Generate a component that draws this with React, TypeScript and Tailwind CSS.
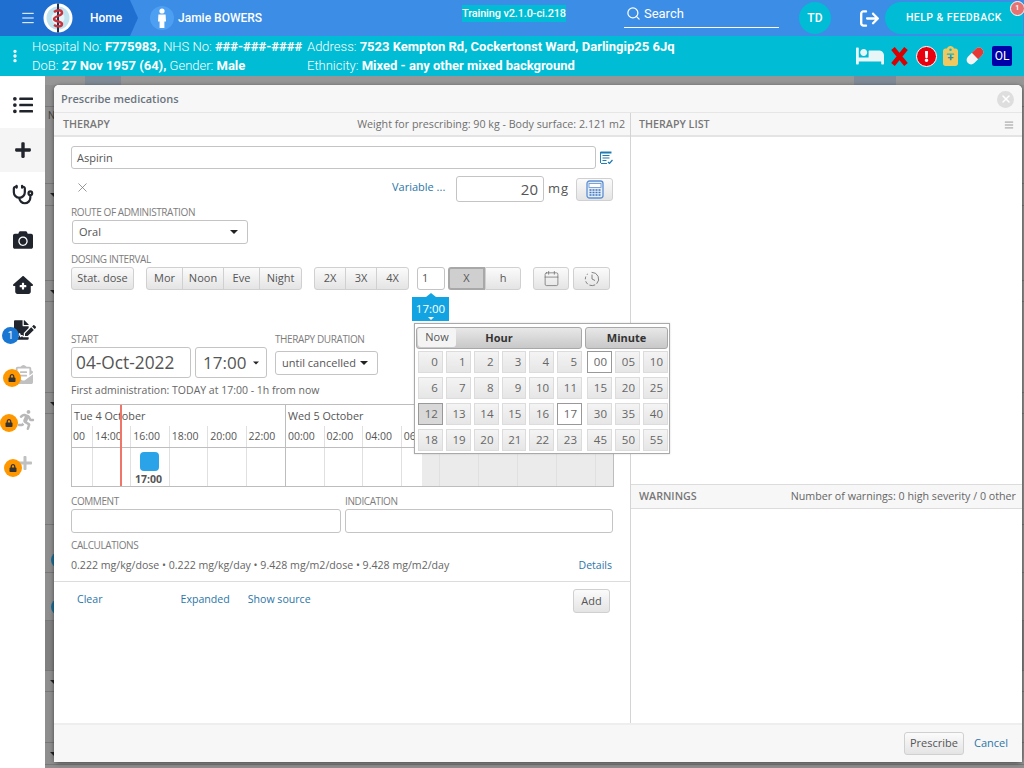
import React from "react";
import { FaBed, FaCamera, FaListUl, FaPlus, FaLock, FaExclamation, FaRunning, FaFileSignature, FaEnvelopeOpenText } from "react-icons/fa";
import { FaHouseMedical, FaArrowRightFromBracket, FaClipboard } from "react-icons/fa6";
import { Search, Stethoscope, X, Menu, EllipsisVertical, Calendar, ClockFading, AlignJustify } from "lucide-react";

const Label = ({ children, className = "" }: { children: React.ReactNode; className?: string }) => (
  <div className={`text-[10px] leading-[12px] tracking-[-0.4px] whitespace-nowrap text-[#7d7d7d] ${className}`}>{children}</div>
);

const Btn = ({ children, className = "" }: { children?: React.ReactNode; className?: string }) => (
  <div className={`flex h-[23px] items-center justify-center border border-[#d0d0d0] bg-gradient-to-b from-[#fbfbfb] to-[#e4e4e4] text-[11px] text-[#555] ${className}`}>
    {children}
  </div>
);

const Caret = ({ className = "" }: { className?: string }) => (
  <span className={`inline-block h-0 w-0 border-x-[4px] border-t-[4px] border-x-transparent border-t-[#222] ${className}`} />
);

const Cell = ({ v, kind }: { v: string; kind?: "sel" | "cur" }) => (
  <div
    className={`flex h-[22px] items-center justify-end pr-[4px] text-[11.5px] text-[#666] ${
      kind === "cur"
        ? "border border-[#999] bg-white"
        : kind === "sel"
          ? "border border-[#999] bg-[#d8d8d8]"
          : "border border-[#dcdcdc] bg-gradient-to-b from-[#f4f4f4] to-[#e6e6e6]"
    }`}
  >
    {v}
  </div>
);

const bgRows: { h: number; tri?: boolean; dot?: number; dark?: boolean; text?: boolean }[] = [
  { h: 22 }, { h: 77, text: true }, { h: 22, tri: true }, { h: 75 }, { h: 21, tri: true }, { h: 91 }, { h: 21, tri: true },
  { h: 111 }, { h: 48, dot: 27 }, { h: 48, dot: 26 }, { h: 50, dark: true }, { h: 21, tri: true }, { h: 51 }, { h: 22, tri: true },
];

const hoursA = ["14:00", "16:00", "18:00", "20:00", "22:00"];

const sideIcons = [
  { icon: <FaPlus size={18} />, cls: "h-[44px] text-[#20242c] bg-[#f5f5f5]" },
  { icon: <Stethoscope size={22} strokeWidth={2.4} />, cls: "h-[45px] text-[#20242c]" },
  { icon: <FaCamera size={20} />, cls: "h-[45px] text-[#20242c]" },
  { icon: <FaHouseMedical size={20} />, cls: "h-[45px] text-[#20242c]" },
];

const LockBadge = ({ className }: { className: string }) => (
  <span className={`absolute flex h-[18px] w-[18px] items-center justify-center rounded-full bg-[#ff9800] text-[#333] ${className}`}>
    <FaLock size={8} />
  </span>
);

export default function App() {
  return (
    <div className="relative flex h-[768px] w-[1024px] flex-col overflow-hidden bg-white font-['Roboto',sans-serif]">
      {/* top bar */}
      <header className="flex h-[36px] items-center bg-[#3b8de6] text-white">
        <div className="flex h-full w-[138px] items-center bg-[#1f6fd0] pl-[20px] [clip-path:polygon(0_0,130px_0,138px_50%,130px_100%,0_100%)]">
          <Menu size={16} strokeWidth={1.5} />
          <svg width="30" height="30" viewBox="0 0 30 30" className="ml-[7px]">
            <circle cx="15" cy="15" r="14.5" fill="#fff" />
            <circle cx="15" cy="15" r="11.5" fill="#bfe3ef" />
            <circle cx="15" cy="15" r="6.5" fill="#e6f4f8" />
            <rect x="14" y="0.5" width="2" height="29" fill="#22304f" />
            <path d="M11 9c4-3 8-2 8 1s-8 3-8 6 8 2 8 5-5 3-8 1" fill="none" stroke="#c8323c" strokeWidth="2.4" />
          </svg>
          <span className="ml-[17px] text-[12px] font-medium">Home</span>
        </div>
        <span className="ml-[12px] flex h-[24px] w-[24px] items-center justify-center rounded-full bg-[#4d9ff2]">
          <svg width="10" height="20" viewBox="0 0 10 20" fill="#fff">
            <circle cx="5" cy="3" r="2.6" />
            <path d="M1.4 6.5h7.2l.4 7H7.4V20H2.6v-6.5H1z" />
          </svg>
        </span>
        <span className="ml-[4px] w-[84px] text-[12px] font-medium whitespace-nowrap">Jamie BOWERS</span>
        <span className="mb-[9px] ml-[200px] bg-[#00bcd4] text-[10.9px] leading-[17px] font-medium tracking-[-0.1px] whitespace-nowrap">Training v2.1.0-ci.218</span>
        <div className="ml-[58px] flex h-[28px] w-[155px] items-center self-start border-b border-white pl-[2px]">
          <Search size={15} strokeWidth={2} />
          <span className="ml-[3px] text-[13px]">Search</span>
        </div>
        <span className="ml-[20px] flex h-[32px] w-[32px] items-center justify-center rounded-full bg-[#00bcd4] text-[12px] font-medium">TD</span>
        <FaArrowRightFromBracket size={19} className="ml-[29px]" />
        <div className="relative ml-[6px] flex h-[32px] w-[138px] shrink-0 items-center justify-center rounded-l-[16px] bg-[#00bcd4] text-[10.5px] font-medium tracking-[0.45px] whitespace-nowrap">
          HELP &amp; FEEDBACK
          <span className="absolute top-[-1px] right-[-2px] flex h-[15px] w-[15px] items-center justify-center rounded-full border border-white bg-[#e57373] text-[7px] font-bold">1</span>
        </div>
      </header>

      {/* patient bar */}
      <div className="flex h-[40px] items-center bg-[#00bcd4] text-[13px] leading-[19px] text-white">
        <EllipsisVertical size={16} strokeWidth={3} className="ml-[7px]" />
        <div className="ml-[9px] w-[275px] font-light">
          <div className="whitespace-nowrap">Hospital No: <b className="font-bold">F775983,</b> NHS No: <b className="font-bold">###-###-####</b></div>
          <div className="whitespace-nowrap">DoB: <b className="font-bold">27 Nov 1957 (64),</b> Gender: <b className="font-bold">Male</b></div>
        </div>
        <div className="font-light">
          <div className="whitespace-nowrap">Address: <b className="font-bold">7523 Kempton Rd, Cockertonst Ward, Darlingip25 6Jq</b></div>
          <div className="whitespace-nowrap">Ethnicity: <b className="font-bold">Mixed - any other mixed background</b></div>
        </div>
        <div className="ml-auto flex items-center pr-[12px]">
          <FaBed size={28} className="text-[#e8f6f8]" />
          <svg width="17" height="19" viewBox="0 0 17 19" className="ml-[7px]">
            <path d="M2 1.5 15 17.5M15 1.5 2 17.5" stroke="#d80000" strokeWidth="4.6" fill="none" />
          </svg>
          <span className="ml-[8px] flex h-[21px] w-[21px] items-center justify-center rounded-full border border-white bg-[#e8000f]">
            <FaExclamation size={11} />
          </span>
          <span className="relative ml-[6px] flex h-[21px] w-[15px] items-center justify-center">
            <FaClipboard size={20} className="text-[#f0c860]" />
            <span className="absolute top-[6px] text-[11px] leading-[11px] font-bold text-[#2c8fb0]">+</span>
          </span>
          <svg width="20" height="20" viewBox="0 0 20 20" className="ml-[7px]">
            <g transform="rotate(-45 10 10)">
              <rect x="0" y="5.5" width="20" height="9" rx="4.5" fill="#f4f4f4" />
              <path d="M10 5.5h5.5a4.5 4.5 0 0 1 0 9H10z" fill="#e53935" />
            </g>
          </svg>
          <span className="ml-[7px] flex h-[20px] w-[20px] items-center justify-center rounded-[2px] bg-[#0000a8] text-[12px]">OL</span>
        </div>
      </div>

      {/* body */}
      <div className="flex flex-1 overflow-hidden">
        <nav className="w-[45px] shrink-0 bg-white">
          <div className="flex h-[52px] items-center justify-center pt-[6px] text-[#20242c]">
            <FaListUl size={20} />
          </div>
          {sideIcons.map((s, i) => (
            <div key={i} className={`flex items-center justify-center ${s.cls}`}>
              {s.icon}
            </div>
          ))}
          <div className="relative flex h-[45px] items-center justify-center pl-[4px] text-[#20242c]">
            <FaFileSignature size={22} />
            <span className="absolute top-[20px] left-[2px] flex h-[17px] w-[17px] items-center justify-center rounded-full bg-[#1976d2] text-[10px] text-white">1</span>
          </div>
          <div className="relative flex h-[45px] items-center justify-center pl-[2px] text-[#c0c0c0]">
            <FaEnvelopeOpenText size={19} />
            <LockBadge className="top-[17px] left-[3px]" />
          </div>
          <div className="relative flex h-[45px] items-center justify-center pl-[6px] text-[#b8b8b8]">
            <FaRunning size={20} />
            <LockBadge className="top-[17px] left-0" />
          </div>
          <div className="relative flex h-[45px] items-center justify-center pb-[4px] pl-[4px] text-[#c0c0c0]">
            <FaPlus size={16} />
            <LockBadge className="top-[17px] left-[4px]" />
          </div>
        </nav>

        {/* dimmed page behind the dialog */}
        <main className="flex-1 bg-[#8e8e8e]">
          <div className="flex h-[9px] items-end bg-[#969696]">
            <span className="ml-[40px] h-[9px] w-[36px] bg-[#7f8a96]" />
            <span className="ml-[733px] h-[9px] w-[42px] bg-[#7f8a96]" />
          </div>
          {bgRows.map((r, i) => (
            <div key={i} className={`relative border-b border-[#777] ${r.dark ? "bg-[#808080]" : "bg-[#8e8e8e]"}`} style={{ height: r.h }}>
              {r.tri && <Caret className="absolute top-[9px] left-[5px]" />}
              {r.dot !== undefined && <span className="absolute left-[6px] h-[16px] w-[16px] rounded-full bg-[#1d6d97]" style={{ top: r.dot }} />}
              {r.text && <span className="absolute top-[2px] left-[3px] text-[10px] leading-[14px] text-[#444]">N</span>}
            </div>
          ))}
        </main>
      </div>

      {/* dialog */}
      <section className="absolute top-[85px] left-[54px] flex h-[677px] w-[968px] flex-col rounded-[5px] bg-white font-['Open_Sans',sans-serif] text-[#555] shadow-[0_1px_4px_rgba(0,0,0,0.5)]">
        <div className="flex h-[28px] items-center justify-between rounded-t-[5px] border-b border-[#e6e6e6] bg-[#f7f7f7] pt-[1px] pr-[8px] pl-[7px]">
          <span className="text-[11px] font-semibold text-[#6b7580]">Prescribe medications</span>
          <span className="flex h-[17px] w-[17px] items-center justify-center rounded-full bg-[#dedede] text-white">
            <X size={12} strokeWidth={3} />
          </span>
        </div>

        <div className="flex min-h-0 flex-1">
          {/* left pane */}
          <div className="flex w-[577px] shrink-0 flex-col border-r border-[#d4d4d4]">
            <div className="flex h-[24px] shrink-0 items-center justify-between border-b-2 border-[#e4e4e4] bg-[#f7f7f7] pt-[1px] pr-[5px] pl-[9px] text-[10.7px]">
              <span className="font-semibold text-[#777]">THERAPY</span>
              <span className="text-[#6f6f6f]">Weight for prescribing: 90 kg - Body surface: 2.121 m2</span>
            </div>

            <div className="px-[17px]">
              <div className="mt-[9px] flex items-center">
                <div className="flex h-[23px] w-[526px] items-center rounded-[3px] border border-[#c4c4c4] px-[5px] pt-[1px] text-[11px]">Aspirin</div>
                <svg width="13" height="13" viewBox="0 0 13 13" className="ml-[4px] text-[#1f7ab0]" fill="none" stroke="currentColor">
                  <path d="M.5 1.5h11" strokeWidth="2" />
                  <path d="M.5 1v11M1 12.5h6M2.5 4.5h7M2.5 7h7M2.5 9.5h4" strokeWidth="1" />
                  <path d="M8 11l1.5 1.5L12.5 9" strokeWidth="1.2" />
                </svg>
              </div>
              <div className="mt-[7px] flex h-[26px] items-center">
                <X size={15} strokeWidth={1.2} className="mb-[4px] ml-[4px] text-[#777]" />
                <span className="mb-[4px] ml-[302px] w-[51px] text-[11px] whitespace-nowrap text-[#2b76a8]">Variable ...</span>
                <div className="ml-[13px] flex h-[26px] w-[88px] items-center justify-end rounded-[3px] border border-[#c4c4c4] pr-[5px] text-[15px] text-[#555]">20</div>
                <span className="ml-[4px] w-[22px] text-[13px] tracking-[1px]">mg</span>
                <Btn className="ml-[6px] w-[37px] rounded-[3px]">
                  <svg width="18" height="19" viewBox="0 0 18 19">
                    <rect x="1" y="1" width="16" height="17" rx="2.5" fill="#e4eefa" stroke="#5f90d2" strokeWidth="1.3" />
                    <rect x="3" y="3.5" width="12" height="4" fill="#fff" stroke="#5f90d2" strokeWidth=".8" />
                    <path d="M3.5 10h11M3.5 12.5h11M3.5 15h11" stroke="#3f74bd" strokeWidth="1.4" strokeDasharray="2 1" />
                  </svg>
                </Btn>
              </div>
              <Label className="mt-[4px]">ROUTE OF ADMINISTRATION</Label>
              <div className="mt-[2px] ml-px flex h-[24px] w-[176px] items-center justify-between rounded-[3px] border border-[#c4c4c4] pr-[9px] pl-[6px] text-[11px]">
                Oral <Caret />
              </div>
              <Label className="mt-[9px]">DOSING INTERVAL</Label>
              <div className="mt-[2px] flex items-center">
                <Btn className="w-[63px] rounded-[3px]">Stat. dose</Btn>
                <div className="ml-[12px] flex">
                  <Btn className="w-[37px] rounded-l-[3px]">Mor</Btn>
                  <Btn className="-ml-px w-[42px]">Noon</Btn>
                  <Btn className="-ml-px w-[37px]">Eve</Btn>
                  <Btn className="-ml-px w-[43px] rounded-r-[3px]">Night</Btn>
                </div>
                <div className="ml-[12px] flex">
                  <Btn className="w-[32px] rounded-l-[3px]">2X</Btn>
                  <Btn className="-ml-px w-[32px]">3X</Btn>
                  <Btn className="-ml-px w-[33px] rounded-r-[3px]">4X</Btn>
                </div>
                <div className="ml-[8px] flex h-[23px] w-[28px] items-center rounded-[3px] border border-[#c4c4c4] pl-[4px] text-[11px]">1</div>
                <div className="ml-[3px] flex">
                  <div className="flex h-[23px] w-[37px] items-center justify-center rounded-l-[3px] border-2 border-[#a8a8a8] bg-[#cfcfcf] text-[11px]">X</div>
                  <Btn className="w-[36px] rounded-r-[3px]">h</Btn>
                </div>
                <Btn className="ml-[12px] w-[36px] rounded-[3px]"><Calendar size={17} strokeWidth={1} className="text-[#666]" /></Btn>
                <Btn className="ml-[4px] w-[37px] rounded-[3px]"><ClockFading size={16} strokeWidth={1.2} className="text-[#666]" /></Btn>
              </div>

              <div className="mt-[43px] flex">
                <div>
                  <Label>START</Label>
                  <div className="mt-[2px] flex">
                    <div className="flex h-[31px] w-[120px] items-center rounded-[3px] border border-[#c4c4c4] pl-[4px] text-[17.3px] text-[#555]">04-Oct-2022</div>
                    <div className="ml-[4px] flex h-[31px] w-[72px] items-center rounded-[3px] border border-[#c4c4c4] pl-[7px] text-[17px] text-[#555]">17:00<Caret className="ml-[6px] scale-75" /></div>
                  </div>
                </div>
                <div className="ml-[8px]">
                  <Label>THERAPY DURATION</Label>
                  <div className="mt-[6px] flex h-[24px] w-[103px] items-center justify-between rounded-[3px] border border-[#c4c4c4] pr-[9px] pl-[6px] text-[11px]">until cancelled <Caret /></div>
                </div>
              </div>
              <div className="mt-[4px] text-[10.5px] leading-[16px] text-[#666]">First administration: TODAY at 17:00 - 1h from now</div>

              {/* timeline */}
              <div className="relative mt-[6px] flex h-[83px] w-[543px] overflow-hidden border border-[#bdbdbd] text-[10.8px]">
                <div className="w-[214px] shrink-0 border-r border-[#bdbdbd]">
                  <div className="h-[21px] pl-[2px] leading-[21px]">Tue 4 October</div>
                  <div className="flex h-[22px] border-b border-[#bdbdbd] text-[10.5px] leading-[21px]">
                    <div className="w-[21px] border-r border-[#e0e0e0] pl-px">00</div>
                    {hoursA.map((h, i) => (
                      <div key={h} className={`w-[38.6px] pl-[2px] ${i < 4 ? "border-r border-[#e0e0e0]" : ""}`}>{h}</div>
                    ))}
                  </div>
                  <div className="flex h-[38px]">
                    <div className="w-[21px] border-r border-[#e0e0e0]" />
                    {hoursA.map((h, i) => (
                      <div key={h} className={`w-[38.6px] ${i < 4 ? "border-r border-[#e0e0e0]" : ""}`} />
                    ))}
                  </div>
                </div>
                <div className="flex-1">
                  <div className="h-[21px] pl-[2px] leading-[21px]">Wed 5 October</div>
                  <div className="flex h-[22px] border-b border-[#bdbdbd] text-[10.5px] leading-[21px]">
                    {["00:00", "02:00", "04:00"].map((h) => (
                      <div key={h} className="w-[38.6px] shrink-0 border-r border-[#e0e0e0] pl-[2px]">{h}</div>
                    ))}
                    <div className="shrink-0 pl-[2px]">06:00</div>
                  </div>
                  <div className="flex h-[38px]">
                    {[0, 1, 2].map((i) => <div key={i} className="w-[38.6px] shrink-0 border-r border-[#e0e0e0]" />)}
                    <div className="w-[20px] shrink-0" />
                    <div className="flex flex-1 bg-[#ebebeb]">
                      {[0, 1, 2, 3, 4].map((i) => (
                        <div key={i} className={`shrink-0 border-r border-[#e0e0e0] ${i === 0 ? "w-[18.6px]" : "w-[38.9px]"}`} />
                      ))}
                    </div>
                  </div>
                </div>
                <span className="absolute top-0 bottom-0 left-[48px] w-[2px] bg-[#ee7568]" />
                <span className="absolute top-[47px] left-[68px] h-[19px] w-[19px] rounded-[4px] bg-[#2aa3e8]" />
                <span className="absolute top-[67px] left-[63px] text-[10.5px] leading-[14px] font-bold text-[#555]">17:00</span>
              </div>

              <div className="mt-[8px] flex gap-[4px]">
                <div className="w-[271px]">
                  <Label>COMMENT</Label>
                  <div className="mt-[2px] h-[24px] rounded-[3px] border border-[#c4c4c4]" />
                </div>
                <div className="w-[268px]">
                  <Label>INDICATION</Label>
                  <div className="mt-[2px] h-[24px] w-[268px] rounded-[3px] border border-[#c4c4c4]" />
                </div>
              </div>
              <Label className="mt-[6px]">CALCULATIONS</Label>
              <div className="mt-[6px] flex h-[18px] w-[541px] items-center justify-between text-[10.6px] text-[#666]">
                <span>0.222 mg/kg/dose • 0.222 mg/kg/day • 9.428 mg/m2/dose • 9.428 mg/m2/day</span>
                <span className="text-[10.5px] text-[#2b76a8]">Details</span>
              </div>
            </div>

            <div className="mt-[6px] flex h-[39px] items-center border-t border-[#dcdcdc] pr-[20px] pl-[23px] text-[10.6px] text-[#2b76a8]">
              <span className="-mt-[2px]">Clear</span>
              <span className="-mt-[2px] ml-[78px]">Expanded</span>
              <span className="-mt-[2px] ml-[18px]">Show source</span>
              <Btn className="ml-auto h-[24px] w-[37px] rounded-[3px] text-[#444]">Add</Btn>
            </div>
          </div>

          {/* right pane */}
          <div className="flex flex-1 flex-col">
            <div className="flex h-[24px] items-center justify-between border-b-2 border-[#e4e4e4] bg-[#f7f7f7] pt-[1px] pr-[8px] pl-[8px] text-[10.7px]">
              <span className="font-semibold text-[#777]">THERAPY LIST</span>
              <AlignJustify size={10} className="text-[#888]" />
            </div>
            <div className="h-[347px]" />
            <div className="flex h-[25px] items-center justify-between border-y border-[#dcdcdc] bg-[#f7f7f7] pr-[6px] pl-[8px] text-[10.7px]">
              <span className="font-semibold text-[#777]">WARNINGS</span>
              <span className="text-[#666]">Number of warnings: 0 high severity / 0 other</span>
            </div>
          </div>
        </div>

        <div className="flex h-[39px] items-center justify-end border-t-2 border-[#eeeeee] bg-[#f7f7f7] pr-[14px] text-[11px]">
          <Btn className="w-[60px] rounded-[3px] text-[#444]">Prescribe</Btn>
          <span className="ml-[10px] text-[#2b76a8]">Cancel</span>
        </div>
      </section>

      {/* time tooltip */}
      <div className="absolute top-[297px] left-[412px] flex h-[24px] w-[37px] items-center justify-center bg-[#12a4e2] font-['Open_Sans',sans-serif] text-[11.5px] text-white">
        17:00
        <span className="absolute -top-[4px] left-[14px] h-0 w-0 border-x-[5px] border-b-[4px] border-x-transparent border-b-[#12a4e2]" />
        <span className="absolute bottom-[1px] left-[16px] h-0 w-0 border-x-[3px] border-t-[3px] border-x-transparent border-t-white" />
      </div>

      {/* time picker */}
      <div className="absolute top-[323px] left-[414px] w-[256px] border border-[#a9a9a9] bg-white px-[1px] pt-[3px] pb-[2px] font-['Open_Sans',sans-serif] shadow-[0_0_2px_rgba(0,0,0,0.15)]">
        <div className="flex gap-[3px]">
          <div className="w-[166px]">
            <div className="relative flex h-[22px] items-center justify-center rounded-[3px] border border-[#a8a8a8] bg-gradient-to-b from-[#e8e8e8] to-[#c8c8c8] text-[11px] font-bold text-[#333]">
              Hour
              <span className="absolute top-0 left-[1px] flex h-[19px] w-[38px] items-center justify-center rounded-[3px] bg-[#f4f4f4] text-[11px] font-normal text-[#555]">Now</span>
            </div>
            <div className="mt-[2px] grid grid-cols-6 gap-x-[3px] gap-y-[4px] pl-[2px]">
              {Array.from({ length: 24 }, (_, i) => (
                <Cell key={i} v={String(i)} kind={i === 12 ? "sel" : i === 17 ? "cur" : undefined} />
              ))}
            </div>
          </div>
          <div className="w-[83px]">
            <div className="flex h-[22px] items-center justify-center rounded-[3px] border border-[#a8a8a8] bg-gradient-to-b from-[#e8e8e8] to-[#c8c8c8] text-[11px] font-bold text-[#333]">Minute</div>
            <div className="mt-[2px] grid grid-cols-3 gap-x-[3px] gap-y-[4px] pl-[2px]">
              {["00", "05", "10", "15", "20", "25", "30", "35", "40", "45", "50", "55"].map((m) => (
                <Cell key={m} v={m} kind={m === "00" ? "cur" : undefined} />
              ))}
            </div>
          </div>
        </div>
      </div>
    </div>
  );
}
